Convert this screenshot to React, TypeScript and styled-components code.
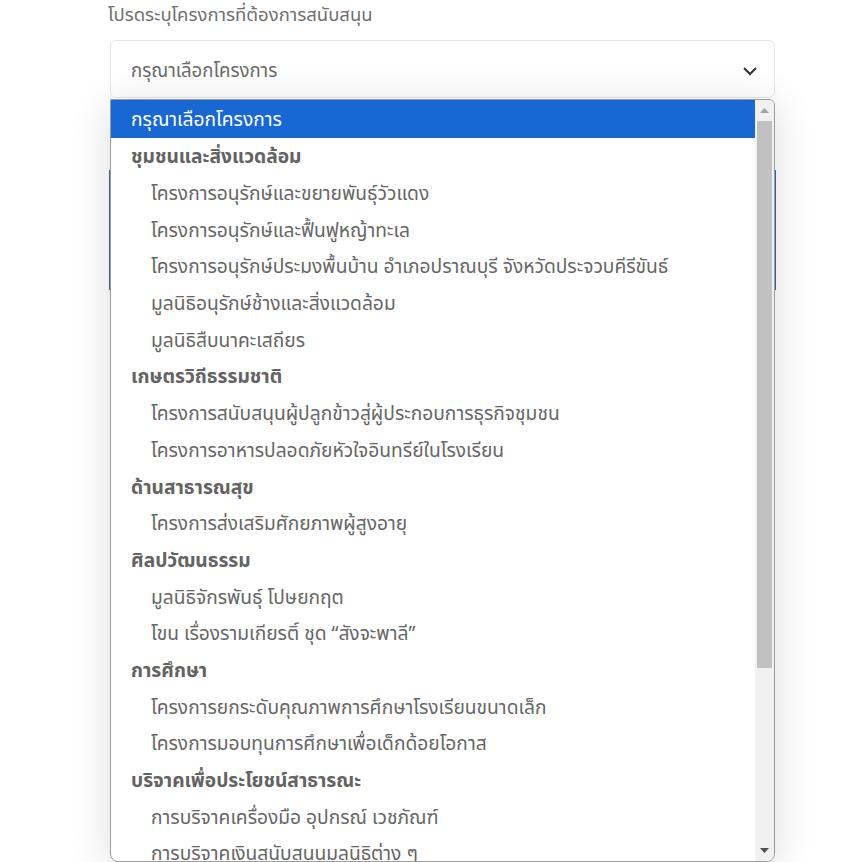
import React from "react"
import styled, { createGlobalStyle } from "styled-components"

const GlobalStyle = createGlobalStyle`
  html, body {
    margin: 0;
    padding: 0;
    background: #ffffff;
    font-family: "Noto Sans Thai", "Noto Sans", "Liberation Sans", sans-serif;
    overflow: hidden;
  }
`

const groups = [
  {
    title: "ชุมชนและสิ่งแวดล้อม",
    items: [
      "โครงการอนุรักษ์และขยายพันธุ์วัวแดง",
      "โครงการอนุรักษ์และฟื้นฟูหญ้าทะเล",
      "โครงการอนุรักษ์ประมงพื้นบ้าน อำเภอปราณบุรี จังหวัดประจวบคีรีขันธ์",
      "มูลนิธิอนุรักษ์ช้างและสิ่งแวดล้อม",
      "มูลนิธิสืบนาคะเสถียร",
    ],
  },
  {
    title: "เกษตรวิถีธรรมชาติ",
    items: [
      "โครงการสนับสนุนผู้ปลูกข้าวสู่ผู้ประกอบการธุรกิจชุมชน",
      "โครงการอาหารปลอดภัยหัวใจอินทรีย์ในโรงเรียน",
    ],
  },
  {
    title: "ด้านสาธารณสุข",
    items: ["โครงการส่งเสริมศักยภาพผู้สูงอายุ"],
  },
  {
    title: "ศิลปวัฒนธรรม",
    items: ["มูลนิธิจักรพันธุ์ โปษยกฤต", "โขน เรื่องรามเกียรติ์ ชุด “สังจะพาลี”"],
  },
  {
    title: "การศึกษา",
    items: [
      "โครงการยกระดับคุณภาพการศึกษาโรงเรียนขนาดเล็ก",
      "โครงการมอบทุนการศึกษาเพื่อเด็กด้อยโอกาส",
    ],
  },
  {
    title: "บริจาคเพื่อประโยชน์สาธารณะ",
    items: ["การบริจาคเครื่องมือ อุปกรณ์ เวชภัณฑ์", "การบริจาคเงินสนับสนุนมูลนิธิต่าง ๆ"],
  },
]

const Page = styled.div`
  width: 843px;
  height: 862px;
  overflow: hidden;
  padding: 0 68px 0 110px;
  box-sizing: border-box;
`

const Label = styled.div`
  margin: 0 0 0 -2px;
  padding-top: 3px;
  height: 37px;
  font-size: 18.5px;
  color: #707070;
  line-height: 24px;
`

const SelectWrap = styled.div`
  position: relative;
  width: 665px;
`

const SelectBox = styled.div`
  height: 58px;
  box-sizing: border-box;
  border: 1px solid #e6e6e6;
  border-radius: 6px;
  display: flex;
  align-items: center;
  justify-content: space-between;
  padding: 4px 16px 0 20px;
  font-size: 18.6px;
  color: #6a6a6a;
`

const Behind = styled.div`
  margin-top: 72px;
  height: 120px;
  width: 667px;
  margin-left: -1px;
  box-sizing: border-box;
  border-left: 1px solid #2f6ea8;
  border-right: 1px solid #2f6ea8;
`

const Popup = styled.div`
  position: absolute;
  top: 59px;
  left: 0;
  width: 665px;
  height: 763px;
  box-sizing: border-box;
  border: 1px solid #9c9c9c;
  border-radius: 0 6px 8px 8px;
  background: #ffffff;
  box-shadow: 0 6px 40px rgba(0, 0, 0, 0.14);
  display: flex;
  overflow: hidden;
`

const List = styled.div`
  flex: 1;
  overflow: hidden;
`

const Row = styled.div<{ $kind: "selected" | "group" | "item" }>`
  height: 36.7px;
  display: flex;
  align-items: center;
  white-space: nowrap;
  font-size: 19.2px;
  padding-top: 3px;
  box-sizing: border-box;
  padding-left: ${(p) => (p.$kind === "item" ? "40px" : "20px")};
  font-weight: ${(p) => (p.$kind === "group" ? 700 : 400)};
  color: ${(p) => (p.$kind === "selected" ? "#ffffff" : p.$kind === "group" ? "#636363" : "#666666")};
  background: ${(p) => (p.$kind === "selected" ? "#1967d2" : "transparent")};
  ${(p) => (p.$kind === "selected" ? "height: 38px;" : "")}
`

const Scrollbar = styled.div`
  width: 19px;
  background: #f1f1f1;
  display: flex;
  flex-direction: column;
  align-items: center;
`

const Arrow = styled.div`
  height: 21px;
  display: flex;
  align-items: center;
  justify-content: center;
  width: 100%;
`

const Thumb = styled.div`
  width: 15px;
  height: 547px;
  background: #c1c1c1;
`

const Track = styled.div`
  flex: 1;
`

const Triangle = ({ up, color }: { up?: boolean; color: string }) => (
  <svg width="9" height="5" viewBox="0 0 9 5">
    <path d={up ? "M0 5 L4.5 0 L9 5 Z" : "M0 0 L4.5 5 L9 0 Z"} fill={color} />
  </svg>
)

export default function App() {
  return (
    <>
      <GlobalStyle />
      <Page>
        <Label>โปรดระบุโครงการที่ต้องการสนับสนุน</Label>
        <SelectWrap>
          <SelectBox>
            <span>กรุณาเลือกโครงการ</span>
            <svg width="16" height="16" viewBox="0 0 16 16">
              <path d="M2 5 L8 11 L14 5" fill="none" stroke="#333" strokeWidth="2" />
            </svg>
          </SelectBox>
          <Behind />
          <Popup>
            <List>
              <Row $kind="selected">กรุณาเลือกโครงการ</Row>
              {groups.map((g) => (
                <React.Fragment key={g.title}>
                  <Row $kind="group">{g.title}</Row>
                  {g.items.map((it) => (
                    <Row $kind="item" key={it}>{it}</Row>
                  ))}
                </React.Fragment>
              ))}
            </List>
            <Scrollbar>
              <Arrow>
                <Triangle up color="#a3a3a3" />
              </Arrow>
              <Thumb />
              <Track />
              <Arrow>
                <Triangle color="#505050" />
              </Arrow>
            </Scrollbar>
          </Popup>
        </SelectWrap>
      </Page>
    </>
  )
}
